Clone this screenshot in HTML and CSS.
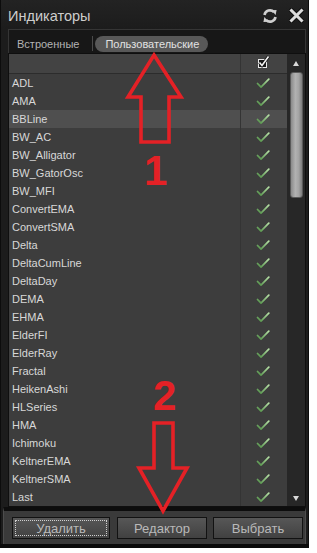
FILE: index.html
```html
<!DOCTYPE html>
<html lang="ru">
<head>
<meta charset="utf-8">
<title>Индикаторы</title>
<link rel="stylesheet" href="styles.css">
</head>
<body>
<svg width="0" height="0" class="defs">
  <defs>
    <linearGradient id="gchk" x1="0" y1="1" x2="1" y2="0">
      <stop offset="0" stop-color="#4f8f45"/>
      <stop offset="1" stop-color="#b6e0a6"/>
    </linearGradient>
    <symbol id="chk" viewBox="0 0 14 11">
      <path d="M1.5 5.5 L5 9.2 L12.8 1.2" fill="none" stroke="url(#gchk)" stroke-width="1.7" stroke-linecap="round" stroke-linejoin="round"/>
    </symbol>
  </defs>
</svg>
<div class="win">
  <div class="titlebar">
    <span class="title">Индикаторы</span>
    <div class="tools">
      <svg class="ico" width="16" height="16" viewBox="0 0 16 16">
        <path d="M2.5 7 A5.5 5.5 0 0 1 12 4.2" fill="none" stroke="#cfcfcf" stroke-width="2.6"/>
        <path d="M9.5 2.2 L14.6 2 L13.6 7 Z" fill="#cfcfcf"/>
        <path d="M13.5 9 A5.5 5.5 0 0 1 4 11.8" fill="none" stroke="#cfcfcf" stroke-width="2.6"/>
        <path d="M6.5 13.8 L1.4 14 L2.4 9 Z" fill="#cfcfcf"/>
      </svg>
      <svg class="ico" width="15" height="15" viewBox="0 0 15 15">
        <path d="M2.5 2.5 L12.5 12.5 M12.5 2.5 L2.5 12.5" stroke="#111" stroke-width="5" stroke-linecap="square"/>
        <path d="M2.5 2.5 L12.5 12.5 M12.5 2.5 L2.5 12.5" stroke="#dcdcdc" stroke-width="3" stroke-linecap="square"/>
      </svg>
    </div>
  </div>
  <div class="tabs">
    <span class="tab">Встроенные</span>
    <span class="sep"></span>
    <span class="tab active">Пользовательские</span>
  </div>
  <div class="list">
    <div class="table">
      <div class="head">
        <div class="name"></div>
        <div class="mark">
          <svg width="14" height="14" viewBox="0 0 14 14">
            <rect x="2.5" y="4.5" width="8" height="8" fill="#1a1a1a" stroke="#e8e8e8" stroke-width="1"/>
            <path d="M3.5 7.5 L6 10.5 L12.5 1.5" fill="none" stroke="#111" stroke-width="3"/>
            <path d="M3.5 7.5 L6 10.5 L12.5 1.5" fill="none" stroke="#f2f2f2" stroke-width="1.6"/>
          </svg>
        </div>
      </div>
      <div class="row"><div class="name">ADL</div><div class="mark"><svg width="14" height="11"><use href="#chk"/></svg></div></div>
      <div class="row"><div class="name">AMA</div><div class="mark"><svg width="14" height="11"><use href="#chk"/></svg></div></div>
      <div class="row sel"><div class="name">BBLine</div><div class="mark"><svg width="14" height="11"><use href="#chk"/></svg></div></div>
      <div class="row"><div class="name">BW_AC</div><div class="mark"><svg width="14" height="11"><use href="#chk"/></svg></div></div>
      <div class="row"><div class="name">BW_Alligator</div><div class="mark"><svg width="14" height="11"><use href="#chk"/></svg></div></div>
      <div class="row"><div class="name">BW_GatorOsc</div><div class="mark"><svg width="14" height="11"><use href="#chk"/></svg></div></div>
      <div class="row"><div class="name">BW_MFI</div><div class="mark"><svg width="14" height="11"><use href="#chk"/></svg></div></div>
      <div class="row"><div class="name">ConvertEMA</div><div class="mark"><svg width="14" height="11"><use href="#chk"/></svg></div></div>
      <div class="row"><div class="name">ConvertSMA</div><div class="mark"><svg width="14" height="11"><use href="#chk"/></svg></div></div>
      <div class="row"><div class="name">Delta</div><div class="mark"><svg width="14" height="11"><use href="#chk"/></svg></div></div>
      <div class="row"><div class="name">DeltaCumLine</div><div class="mark"><svg width="14" height="11"><use href="#chk"/></svg></div></div>
      <div class="row"><div class="name">DeltaDay</div><div class="mark"><svg width="14" height="11"><use href="#chk"/></svg></div></div>
      <div class="row"><div class="name">DEMA</div><div class="mark"><svg width="14" height="11"><use href="#chk"/></svg></div></div>
      <div class="row"><div class="name">EHMA</div><div class="mark"><svg width="14" height="11"><use href="#chk"/></svg></div></div>
      <div class="row"><div class="name">ElderFI</div><div class="mark"><svg width="14" height="11"><use href="#chk"/></svg></div></div>
      <div class="row"><div class="name">ElderRay</div><div class="mark"><svg width="14" height="11"><use href="#chk"/></svg></div></div>
      <div class="row"><div class="name">Fractal</div><div class="mark"><svg width="14" height="11"><use href="#chk"/></svg></div></div>
      <div class="row"><div class="name">HeikenAshi</div><div class="mark"><svg width="14" height="11"><use href="#chk"/></svg></div></div>
      <div class="row"><div class="name">HLSeries</div><div class="mark"><svg width="14" height="11"><use href="#chk"/></svg></div></div>
      <div class="row"><div class="name">HMA</div><div class="mark"><svg width="14" height="11"><use href="#chk"/></svg></div></div>
      <div class="row"><div class="name">Ichimoku</div><div class="mark"><svg width="14" height="11"><use href="#chk"/></svg></div></div>
      <div class="row"><div class="name">KeltnerEMA</div><div class="mark"><svg width="14" height="11"><use href="#chk"/></svg></div></div>
      <div class="row"><div class="name">KeltnerSMA</div><div class="mark"><svg width="14" height="11"><use href="#chk"/></svg></div></div>
      <div class="row"><div class="name">Last</div><div class="mark"><svg width="14" height="11"><use href="#chk"/></svg></div></div>
    </div>
    <div class="scroll">
      <div class="arrow up"></div>
      <div class="thumb"></div>
      <div class="fill"></div>
      <div class="arrow down"></div>
    </div>
  </div>
  <div class="buttons">
    <button class="btn focus">Удалить</button>
    <button class="btn mid">Редактор</button>
    <button class="btn last">Выбрать</button>
  </div>
</div>
<svg class="annot" width="317" height="553" viewBox="0 0 317 553">
  <path d="M154 55 L181 97 L169 97 L169 142 L141 142 L141 97 L128 97 Z" fill="none" stroke="#e42126" stroke-width="3.6" stroke-linejoin="miter"/>
  <path d="M154 423 L173 423 L173 468 L187 468 L163 511 L139 468 L154 468 Z" fill="none" stroke="#e42126" stroke-width="3.6" stroke-linejoin="miter"/>
</svg>
<span class="num n1">1</span>
<span class="num n2">2</span>
</body>
</html>
```

FILE: styles.css
```css
* { box-sizing: border-box; }
html, body { margin: 0; padding: 0; }
body {
  width: 317px;
  height: 553px;
  background: #ffffff;
  position: relative;
  overflow: hidden;
  font-family: "Liberation Sans", Arial, sans-serif;
}
.defs { position: absolute; }

.win {
  width: 309px;
  height: 548px;
  background: #1c1c1c;
  border-left: 1px solid #0c0c0c;
  border-right: 1px solid #0c0c0c;
  border-bottom: 4px solid #0a0a0a;
  padding: 0 2px 0 7px;
  display: flex;
  flex-direction: column;
}

.titlebar {
  height: 29px;
  display: flex;
  align-items: center;
  padding-top: 2px;
  background: linear-gradient(#232323, #1c1c1c);
  margin: 0 -2px 0 -7px;
  padding-left: 7px;
  padding-right: 2px;
}
.title { font-size: 14.5px; color: #cdcdcd; }
.tools { margin-left: auto; display: flex; align-items: center; gap: 11px; margin-right: 2px; }
.ico { display: block; }

.tabs {
  height: 24px;
  border: 1px solid #353535;
  border-bottom: none;
  background: #171717;
  display: flex;
  align-items: flex-start;
  padding: 6px 0 0 8px;
}
.tab {
  font-size: 11px;
  line-height: 16px;
  height: 16px;
  color: #b4b4b4;
}
.sep { width: 1px; height: 15px; background: #4a4a4a; margin: 0 2px 0 13px; }
.tab.active {
  background: #585858;
  color: #e2e2e2;
  border-radius: 8px;
  padding: 0 9px 0 10px;
}

.list {
  height: 454px;
  border: 1px solid #0f0f0f;
  display: flex;
}
.table { width: 278px; display: flex; flex-direction: column; background: #3d3d3d; }
.head {
  height: 20px;
  display: flex;
  background: #434343;
  border-bottom: 1px solid #2c2c2c;
}
.row { height: 18px; display: flex; background: #3d3d3d; }
.row.sel { background: #4f4f4f; }
.name {
  width: 231px;
  padding-left: 3px;
  font-size: 11px;
  line-height: 18px;
  color: #d8d8d8;
}
.mark {
  width: 47px;
  border-left: 1px solid #343434;
  display: flex;
  align-items: center;
  justify-content: center;
  padding-right: 2px;
}
.mark svg { display: block; }
.head .mark { align-items: flex-start; padding-top: 1px; }

.scroll {
  width: 18px;
  background: #272727;
  display: flex;
  flex-direction: column;
  align-items: center;
}
.arrow { width: 18px; height: 18px; position: relative; }
.arrow::after {
  content: "";
  position: absolute;
  left: 6px;
  width: 0; height: 0;
  border-left: 3.5px solid transparent;
  border-right: 3.5px solid transparent;
}
.arrow.up::after { top: 7px; border-bottom: 5px solid #d8d8d8; }
.arrow.down::after { top: 8px; border-top: 5px solid #d8d8d8; }
.thumb {
  width: 13px;
  height: 126px;
  border-radius: 3px;
  background: linear-gradient(to right, #8a8a8a, #b2b2b2 40%, #a4a4a4 70%, #7e7e7e);
  border: 1px solid #5a5a5a;
}
.fill { flex: 1; }

.buttons {
  height: 37px;
  margin: 0 0 0 -5px;
  border-top: 4px solid #0d0d0d;
  background: #3a3a3a;
  border-left: 1px solid #4c4c4c;
  border-right: 1px solid #4c4c4c;
  display: flex;
  align-items: flex-start;
  padding: 6px 0 0 8px;
}
.btn {
  height: 22px;
  background: linear-gradient(#575757, #414141);
  border: 1px solid #121212;
  color: #b9b9b9;
  font-family: "Liberation Sans", Arial, sans-serif;
  font-size: 13px;
  padding: 0;
  border-radius: 0;
}
.btn.focus { width: 98px; outline: 1px dotted #cfcfcf; outline-offset: -4px; }
.btn.mid { width: 90px; margin-left: 7px; }
.btn.last { width: 90px; margin-left: 6px; }

.annot { position: absolute; left: 0; top: 0; pointer-events: none; }
.num {
  position: absolute;
  font-family: "Liberation Sans", Arial, sans-serif;
  font-weight: bold;
  font-size: 42px;
  line-height: 42px;
  color: #e42126;
}
.n1 { left: 144px; top: 150px; }
.n2 { left: 153px; top: 375px; }
```
